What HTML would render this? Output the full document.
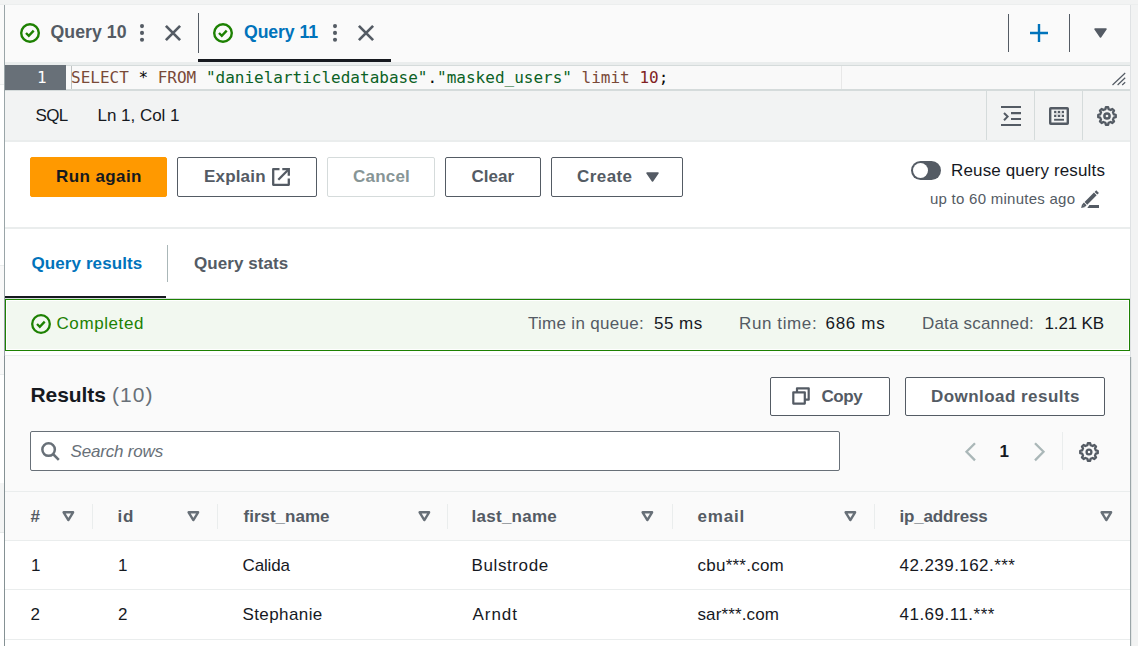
<!DOCTYPE html>
<html lang="en">
<head>
<meta charset="utf-8">
<title>Athena Query Editor</title>
<style>
*{box-sizing:border-box;margin:0;padding:0}
html,body{width:1138px;height:646px;overflow:hidden;background:#f2f3f3}
body{position:relative;font-family:"Liberation Sans","DejaVu Sans",sans-serif;color:#16191f;font-size:17px}
.abs{position:absolute}
.t{position:absolute;white-space:nowrap;line-height:20px}
.btn{position:absolute;border:1px solid #545b64;border-radius:2px;background:#fff}
svg{position:absolute;overflow:visible}
.vline{position:absolute;width:1px}
.hline{position:absolute;height:1px;background:#eaeded}
.mono{font-family:"DejaVu Sans Mono","Liberation Mono",monospace;font-size:16px}
</style>
</head>
<body>
<!-- outer left strip & panel borders -->
<div class="abs" style="left:0;top:5px;width:4px;height:79px;background:#fafafa"></div>
<div class="abs" style="left:0;top:84px;width:4px;height:1px;background:#eaeded"></div>
<div class="abs" style="left:0;top:85px;width:4px;height:561px;background:#fff"></div>
<div class="abs" style="left:0;top:265px;width:4px;height:110px;background:#f9f9f9;border-top:1px solid #eaeded;border-bottom:1px solid #eaeded"></div>
<div class="abs" style="left:0;top:483px;width:4px;height:50px;background:#f4f5f5;border-bottom:1px solid #e6e9e9"></div>
<div class="abs" style="left:0;top:4px;width:1138px;height:1px;background:#eceeee"></div>
<div class="abs" style="left:4px;top:5px;width:1px;height:641px;background:#9aa5a8"></div>
<div class="abs" style="left:4px;top:356px;width:1px;height:290px;background:#859194"></div>
<div class="abs" style="left:1130px;top:5px;width:1px;height:352px;background:#dfe2e4"></div>
<div class="abs" style="left:1130px;top:357px;width:1px;height:289px;background:#9aa5a8"></div>
<div class="abs" style="left:1131px;top:357px;width:1px;height:289px;background:#e3e6e6"></div>

<!-- tab bar -->
<div class="abs" style="left:5px;top:5px;width:1125px;height:57px;background:#fafafa"></div>
<div class="abs" style="left:5px;top:62px;width:1125px;height:3px;background:#eaeded"></div>
<div class="abs" style="left:198px;top:59px;width:193px;height:3px;background:#16191f"></div>
<div class="vline" style="left:198px;top:13px;height:40px;background:#545b64"></div>
<div class="vline" style="left:1008px;top:14px;height:38px;background:#545b64"></div>
<div class="vline" style="left:1069px;top:14px;height:38px;background:#545b64"></div>

<svg style="left:20px;top:23px" width="20" height="20" viewBox="0 0 20 20" fill="none" stroke="#1d8102" stroke-width="2.400"><circle cx="10" cy="10" r="8.8"/><path d="M6 10l2.800 2.800 4.900-5.200"/></svg>
<svg style="left:139px;top:23px" width="6" height="20" viewBox="0 0 6 20" fill="#545b64"><circle cx="3" cy="3.100" r="2.050"/><circle cx="3" cy="9.900" r="2.050"/><circle cx="3" cy="16.800" r="2.050"/></svg>
<svg style="left:165px;top:24.700px" width="16" height="16" viewBox="0 0 16 16" fill="none" stroke="#545b64" stroke-width="2.700"><path d="M0.900 0.900l14.200 14.200M15.100 0.900L0.900 15.100"/></svg>

<svg style="left:213px;top:23px" width="20" height="20" viewBox="0 0 20 20" fill="none" stroke="#1d8102" stroke-width="2.400"><circle cx="10" cy="10" r="8.800"/><path d="M6 10l2.800 2.800 4.900-5.200"/></svg>
<svg style="left:332px;top:23px" width="6" height="20" viewBox="0 0 6 20" fill="#545b64"><circle cx="3" cy="3.100" r="2.050"/><circle cx="3" cy="9.900" r="2.050"/><circle cx="3" cy="16.800" r="2.050"/></svg>
<svg style="left:358px;top:24.700px" width="16" height="16" viewBox="0 0 16 16" fill="none" stroke="#545b64" stroke-width="2.700"><path d="M0.900 0.900l14.200 14.200M15.100 0.900L0.900 15.100"/></svg>

<svg style="left:1030px;top:24px" width="18" height="18" viewBox="0 0 18 18" fill="none" stroke="#0073bb" stroke-width="2.400"><path d="M9 0v18M0 9h18"/></svg>
<svg style="left:1093.500px;top:28px" width="13" height="10" viewBox="0 0 13 10" fill="#545b64"><path d="M1 1h11L6.500 9z" stroke="#545b64" stroke-width="1.500" stroke-linejoin="round"/></svg>

<!-- editor -->
<div class="abs" style="left:5px;top:65px;width:1125px;height:1px;background:#d5dbdb"></div>
<div class="abs" style="left:5px;top:66px;width:1125px;height:23px;background:#f9f9f9"></div>
<div class="abs" style="left:5px;top:89px;width:1125px;height:2px;background:#d5dbdb"></div>
<div class="abs" style="left:5px;top:65px;width:61px;height:25px;background:#687078"></div>
<span class="t mono" style="left:37px;top:68px;color:#fff">1</span>
<div class="abs" style="left:71px;top:66px;width:1px;height:23px;background:#bfc3c3"></div>
<div class="abs" style="left:841px;top:66px;width:1px;height:23px;background:#e8e8e8"></div>
<span class="t mono" id="code" style="left:71px;top:68px;color:#080808"><span style="color:#794938">SELECT</span> * <span style="color:#794938">FROM</span> <span style="color:#0b6125">"danielarticledatabase"</span>.<span style="color:#0b6125">"masked_users"</span> <span style="color:#794938">limit</span> <span style="color:#811f24">10</span>;</span>
<svg style="left:1112px;top:72px" width="14" height="14" viewBox="0 0 14 14" fill="none" stroke="#545b64" stroke-width="1.200"><path d="M0.500 13L13.200 1M5.600 13l7.600-7.300M10.200 13l3-2.800"/></svg>

<!-- status bar -->
<div class="abs" style="left:5px;top:91px;width:1125px;height:49px;background:#f2f3f3"></div>
<div class="abs" style="left:5px;top:140px;width:1125px;height:2px;background:#eaeded"></div>
<div class="vline" style="left:986px;top:91px;height:49px;background:#d5dbdb"></div>
<div class="vline" style="left:1034px;top:91px;height:49px;background:#d5dbdb"></div>
<div class="vline" style="left:1082px;top:91px;height:49px;background:#d5dbdb"></div>
<svg style="left:1001px;top:106px" width="20" height="20" viewBox="0 0 20 20" fill="none" stroke="#545b64" stroke-width="2.100"><path d="M0 1h20M10 7.100h10M10 13h10M0 19h20"/><path d="M3 7l3.600 3.600L3 14.200" stroke-width="2"/></svg>
<svg style="left:1049px;top:107px" width="20" height="18" viewBox="0 0 20 18" fill="none" stroke="#545b64" stroke-width="2.400"><rect x="1.200" y="1.200" width="17.600" height="15.600" rx="0.600"/><g fill="#545b64" stroke="none"><rect x="5.1" y="3.9" width="2.100" height="2.100"/><rect x="8.95" y="3.9" width="2.100" height="2.100"/><rect x="12.9" y="3.9" width="2.100" height="2.100"/><rect x="5.1" y="7.9" width="2.100" height="2.100"/><rect x="8.95" y="7.9" width="2.100" height="2.100"/><rect x="12.9" y="7.9" width="2.100" height="2.100"/><rect x="5.100" y="11.800" width="9.900" height="1.900"/><rect x="5.100" y="3.900" width="9.900" height="6.200" fill="#545b64" opacity="0.18"/></g></svg>
<svg style="left:1097px;top:106px" width="20" height="20" viewBox="0 0 20 20" fill="none" stroke="#545b64" stroke-width="2.300" stroke-linejoin="round"><circle cx="10" cy="10" r="2.600" stroke-width="2.500"/><path d="M8.37 3.19 L8.82 1.23 L11.18 1.23 L11.63 3.19 L13.66 4.03 L15.37 2.96 L17.04 4.63 L15.97 6.34 L16.81 8.37 L18.77 8.82 L18.77 11.18 L16.81 11.63 L15.97 13.66 L17.04 15.37 L15.37 17.04 L13.66 15.97 L11.63 16.81 L11.18 18.77 L8.82 18.77 L8.37 16.81 L6.34 15.97 L4.63 17.04 L2.96 15.37 L4.03 13.66 L3.19 11.63 L1.23 11.18 L1.23 8.82 L3.19 8.37 L4.03 6.34 L2.96 4.63 L4.63 2.96 L6.34 4.03Z"/></svg>

<!-- action row -->
<div class="abs" style="left:5px;top:142px;width:1125px;height:85px;background:#fff"></div>
<div class="hline" style="left:5px;top:227px;width:1125px;height:2px"></div>
<div class="btn" style="left:30px;top:157px;width:137px;height:40px;background:#ff9900;border-color:#ff9900"></div>
<div class="btn" style="left:177px;top:157px;width:140px;height:40px"></div>
<svg style="left:272px;top:168px" width="18" height="18" viewBox="0 0 18 18" fill="none" stroke="#545b64" stroke-width="2.300" stroke-linejoin="round"><path d="M7.500 1.200H1.200v15.600h15.600V10.400"/><path d="M10.300 1.200h6.500v6.600" stroke-linejoin="miter"/><path d="M16.500 1.500L6.300 11.700"/></svg>
<div class="btn" style="left:327px;top:157px;width:108px;height:40px;border-color:#d5dbdb"></div>
<div class="btn" style="left:445px;top:157px;width:96px;height:40px"></div>
<div class="btn" style="left:551px;top:157px;width:132px;height:40px"></div>
<svg style="left:645.500px;top:172px" width="13" height="10" viewBox="0 0 13 10" fill="#545b64"><path d="M1 1h11L6.500 9z" stroke="#545b64" stroke-width="1.500" stroke-linejoin="round"/></svg>

<div class="abs" style="left:911px;top:161px;width:30px;height:19px;border-radius:9.500px;background:#545b64"></div>
<div class="abs" style="left:913px;top:163px;width:15px;height:15px;border-radius:7.500px;background:#fff"></div>
<svg style="left:1081px;top:190px" width="18" height="18" viewBox="0 0 18 18" fill="#545b64"><path d="M0.100 18.100L1.100 13.900 4.300 17.100z"/><path d="M2.700 15.500L16.600 1.600" stroke="#545b64" stroke-width="3.800" stroke-dasharray="2.200 0.900 13.300 0.900 3.200" fill="none"/><path d="M6.300 18l2.100-3.100H18V18z"/></svg>

<!-- result tabs -->
<div class="abs" style="left:5px;top:229px;width:1125px;height:70px;background:#fff"></div>
<div class="vline" style="left:167px;top:245px;height:37px;background:#aab7b8"></div>
<div class="abs" style="left:5px;top:298px;width:1125px;height:1px;background:#d5dbdb"></div>
<div class="abs" style="left:5px;top:296px;width:161px;height:2px;background:#16191f"></div>

<!-- completed bar -->
<div class="abs" style="left:5px;top:299px;width:1125px;height:52px;background:#f2f8f0;border:1px solid #1d8102;box-shadow:inset 0 0 0 1px #fff"></div>
<svg style="left:31px;top:314px" width="20" height="20" viewBox="0 0 20 20" fill="none" stroke="#1d8102" stroke-width="2.300"><circle cx="10" cy="10" r="8.800"/><path d="M6 10l2.800 2.800 4.900-5.200"/></svg>

<!-- results header -->
<div class="abs" style="left:5px;top:351px;width:1125px;height:4px;background:#fff"></div>
<div class="hline" style="left:5px;top:355px;width:1125px"></div>
<div class="abs" style="left:5px;top:356px;width:1125px;height:135px;background:#fafafa"></div>
<div class="btn" style="left:770px;top:377px;width:120px;height:39px"></div>
<svg style="left:792px;top:387px" width="18" height="18" viewBox="0 0 18 18" fill="#fff" stroke="#545b64" stroke-width="2.200" stroke-linejoin="round"><path d="M5 1.300h11.700v11.400H5z"/><path d="M1.300 5.300h11.500v11.300H1.300z"/></svg>
<div class="btn" style="left:905px;top:377px;width:200px;height:39px"></div>
<div class="abs" style="left:30px;top:431px;width:810px;height:40px;background:#fff;border:1px solid #687078;border-radius:2px"></div>
<svg style="left:41px;top:442px" width="19" height="19" viewBox="0 0 19 19" fill="none" stroke="#687078" stroke-width="2.500"><circle cx="7.600" cy="7.600" r="6.250"/><path d="M12 12l5.800 5.800"/></svg>
<svg style="left:964px;top:442px" width="12" height="20" viewBox="0 0 12 20" fill="none" stroke="#aab7b8" stroke-width="2.300"><path d="M11 1.200L2.500 9.800l8.500 8.600"/></svg>
<svg style="left:1034px;top:442px" width="12" height="20" viewBox="0 0 12 20" fill="none" stroke="#aab7b8" stroke-width="2.300"><path d="M1 1.200l8.500 8.600L1 18.400"/></svg>
<div class="vline" style="left:1062px;top:432px;height:38px;background:#eaeded"></div>
<svg style="left:1079px;top:442px" width="20" height="20" viewBox="0 0 20 20" fill="none" stroke="#545b64" stroke-width="2.300" stroke-linejoin="round"><circle cx="10" cy="10" r="2.400" stroke-width="2.300"/><path d="M8.37 3.19 L8.82 1.23 L11.18 1.23 L11.63 3.19 L13.66 4.03 L15.37 2.96 L17.04 4.63 L15.97 6.34 L16.81 8.37 L18.77 8.82 L18.77 11.18 L16.81 11.63 L15.97 13.66 L17.04 15.37 L15.37 17.04 L13.66 15.97 L11.63 16.81 L11.18 18.77 L8.82 18.77 L8.37 16.81 L6.34 15.97 L4.63 17.04 L2.96 15.37 L4.03 13.66 L3.19 11.63 L1.23 11.18 L1.23 8.82 L3.19 8.37 L4.03 6.34 L2.96 4.63 L4.63 2.96 L6.34 4.03Z"/></svg>

<!-- table -->
<div class="abs" style="left:5px;top:491px;width:1125px;height:50px;background:#fafafa;border-top:1px solid #eaeded;border-bottom:1px solid #eaeded"></div>
<div class="abs" style="left:5px;top:541px;width:1125px;height:105px;background:#fff"></div>
<div class="hline" style="left:5px;top:589px;width:1125px"></div>
<div class="hline" style="left:5px;top:639px;width:1125px"></div>
<div class="vline" style="left:92px;top:504px;height:25px;background:#eaeded"></div>
<div class="vline" style="left:217px;top:504px;height:25px;background:#eaeded"></div>
<div class="vline" style="left:447px;top:504px;height:25px;background:#eaeded"></div>
<div class="vline" style="left:672px;top:504px;height:25px;background:#eaeded"></div>
<div class="vline" style="left:874px;top:504px;height:25px;background:#eaeded"></div>
<svg style="left:61.6px;top:510.700px" width="13" height="11" viewBox="0 0 13 11" fill="none" stroke="#687078" stroke-width="2.400" stroke-linejoin="round"><path d="M1.600 1.300h9.500L6.350 9.100z"/></svg>
<svg style="left:187.4px;top:510.700px" width="13" height="11" viewBox="0 0 13 11" fill="none" stroke="#687078" stroke-width="2.400" stroke-linejoin="round"><path d="M1.600 1.300h9.500L6.350 9.100z"/></svg>
<svg style="left:418px;top:510.700px" width="13" height="11" viewBox="0 0 13 11" fill="none" stroke="#687078" stroke-width="2.400" stroke-linejoin="round"><path d="M1.600 1.300h9.500L6.350 9.100z"/></svg>
<svg style="left:641.3px;top:510.700px" width="13" height="11" viewBox="0 0 13 11" fill="none" stroke="#687078" stroke-width="2.400" stroke-linejoin="round"><path d="M1.600 1.300h9.500L6.350 9.100z"/></svg>
<svg style="left:844.2px;top:510.700px" width="13" height="11" viewBox="0 0 13 11" fill="none" stroke="#687078" stroke-width="2.400" stroke-linejoin="round"><path d="M1.600 1.300h9.500L6.350 9.100z"/></svg>
<svg style="left:1099.5px;top:510.700px" width="13" height="11" viewBox="0 0 13 11" fill="none" stroke="#687078" stroke-width="2.400" stroke-linejoin="round"><path d="M1.600 1.300h9.500L6.350 9.100z"/></svg>

<span class="t" id="q10" style="left:50.50px;top:22px;font-size:17.7px;font-weight:bold;color:#545b64;letter-spacing:0.052px;">Query 10</span>
<span class="t" id="q11" style="left:244.00px;top:22px;font-size:17.7px;font-weight:bold;color:#0073bb;letter-spacing:-0.102px;">Query 11</span>
<span class="t" id="sql" style="left:35.50px;top:106px;font-size:17px;color:#16191f;letter-spacing:-0.630px;">SQL</span>
<span class="t" id="lncol" style="left:97.50px;top:106px;font-size:17px;color:#16191f;letter-spacing:-0.018px;">Ln 1, Col 1</span>
<span class="t" id="run" style="left:56.00px;top:167px;font-size:17px;font-weight:bold;color:#16191f;letter-spacing:0.405px;">Run again</span>
<span class="t" id="explain" style="left:204.00px;top:167px;font-size:17px;font-weight:bold;color:#545b64;letter-spacing:0.180px;">Explain</span>
<span class="t" id="cancel" style="left:353.00px;top:167px;font-size:17px;font-weight:bold;color:#879596;letter-spacing:0.216px;">Cancel</span>
<span class="t" id="clear" style="left:471.50px;top:167px;font-size:17px;font-weight:bold;color:#545b64;letter-spacing:0.045px;">Clear</span>
<span class="t" id="create" style="left:577.00px;top:167px;font-size:17px;font-weight:bold;color:#545b64;letter-spacing:0.432px;">Create</span>
<span class="t" id="reuse" style="left:951.00px;top:161px;font-size:17px;color:#16191f;letter-spacing:0.150px;">Reuse query results</span>
<span class="t" id="upto" style="left:930.00px;top:189px;font-size:15px;color:#545b64;letter-spacing:0.257px;">up to 60 minutes ago</span>
<span class="t" id="qres" style="left:31.50px;top:254px;font-size:17px;font-weight:bold;color:#0073bb;letter-spacing:0.090px;">Query results</span>
<span class="t" id="qstats" style="left:194.00px;top:254px;font-size:17px;font-weight:bold;color:#545b64;letter-spacing:0.054px;">Query stats</span>
<span class="t" id="completed" style="left:56.50px;top:314px;font-size:17px;color:#1d8102;letter-spacing:0.585px;">Completed</span>
<span class="t" id="tiq" style="left:528.00px;top:314px;font-size:17px;color:#545b64;letter-spacing:0.292px;">Time in queue:</span>
<span class="t" id="tiqv" style="left:654.00px;top:314px;font-size:17px;color:#16191f;letter-spacing:0.497px;">55 ms</span>
<span class="t" id="rt" style="left:739.00px;top:314px;font-size:17px;color:#545b64;letter-spacing:0.607px;">Run time:</span>
<span class="t" id="rtv" style="left:825.50px;top:314px;font-size:17px;color:#16191f;letter-spacing:0.684px;">686 ms</span>
<span class="t" id="ds" style="left:922.00px;top:314px;font-size:17px;color:#545b64;letter-spacing:0.182px;">Data scanned:</span>
<span class="t" id="dsv" style="left:1044.50px;top:314px;font-size:17px;color:#16191f;letter-spacing:-0.150px;">1.21 KB</span>
<span class="t" id="results" style="left:30.50px;top:385px;font-size:21px;font-weight:bold;color:#16191f;letter-spacing:-0.090px;">Results</span>
<span class="t" id="rcount" style="left:112.00px;top:385px;font-size:21px;color:#687078;letter-spacing:1.080px;">(10)</span>
<span class="t" id="copy" style="left:821.50px;top:387px;font-size:17px;font-weight:bold;color:#545b64;letter-spacing:-0.420px;">Copy</span>
<span class="t" id="download" style="left:931.00px;top:387px;font-size:17px;font-weight:bold;color:#545b64;letter-spacing:0.456px;">Download results</span>
<span class="t" id="search" style="left:70.50px;top:442px;font-size:17px;color:#687078;letter-spacing:-0.180px;font-style:italic;">Search rows</span>
<span class="t" id="page1" style="left:999.50px;top:442px;font-size:17px;font-weight:bold;color:#16191f;letter-spacing:0.000px;">1</span>
<span class="t" id="h0" style="left:30.50px;top:507px;font-size:17px;font-weight:bold;color:#545b64;letter-spacing:0.000px;">#</span>
<span class="t" id="h1" style="left:117.50px;top:507px;font-size:17px;font-weight:bold;color:#545b64;letter-spacing:0.720px;">id</span>
<span class="t" id="h2" style="left:243.50px;top:507px;font-size:17px;font-weight:bold;color:#545b64;letter-spacing:0.000px;">first_name</span>
<span class="t" id="h3" style="left:471.50px;top:507px;font-size:17px;font-weight:bold;color:#545b64;letter-spacing:0.271px;">last_name</span>
<span class="t" id="h4" style="left:697.50px;top:507px;font-size:17px;font-weight:bold;color:#545b64;letter-spacing:0.812px;">email</span>
<span class="t" id="h5" style="left:899.50px;top:507px;font-size:17px;font-weight:bold;color:#545b64;letter-spacing:-0.180px;">ip_address</span>
<span class="t" id="r1c0" style="left:31.00px;top:556px;font-size:17px;color:#16191f;letter-spacing:0.000px;">1</span>
<span class="t" id="r1c1" style="left:118.00px;top:556px;font-size:17px;color:#16191f;letter-spacing:0.000px;">1</span>
<span class="t" id="r1c2" style="left:242.50px;top:556px;font-size:17px;color:#16191f;letter-spacing:-0.144px;">Calida</span>
<span class="t" id="r1c3" style="left:471.50px;top:556px;font-size:17px;color:#16191f;letter-spacing:0.609px;">Bulstrode</span>
<span class="t" id="r1c4" style="left:697.50px;top:556px;font-size:17px;color:#16191f;letter-spacing:0.240px;">cbu***.com</span>
<span class="t" id="r1c5" style="left:899.50px;top:556px;font-size:17px;color:#16191f;letter-spacing:0.443px;">42.239.162.***</span>
<span class="t" id="r2c0" style="left:30.50px;top:605px;font-size:17px;color:#16191f;letter-spacing:0.000px;">2</span>
<span class="t" id="r2c1" style="left:118.00px;top:605px;font-size:17px;color:#16191f;letter-spacing:0.000px;">2</span>
<span class="t" id="r2c2" style="left:242.50px;top:605px;font-size:17px;color:#16191f;letter-spacing:0.404px;">Stephanie</span>
<span class="t" id="r2c3" style="left:472.50px;top:605px;font-size:17px;color:#16191f;letter-spacing:0.947px;">Arndt</span>
<span class="t" id="r2c4" style="left:697.50px;top:605px;font-size:17px;color:#16191f;letter-spacing:0.120px;">sar***.com</span>
<span class="t" id="r2c5" style="left:899.50px;top:605px;font-size:17px;color:#16191f;letter-spacing:0.491px;">41.69.11.***</span>
</body>
</html>
